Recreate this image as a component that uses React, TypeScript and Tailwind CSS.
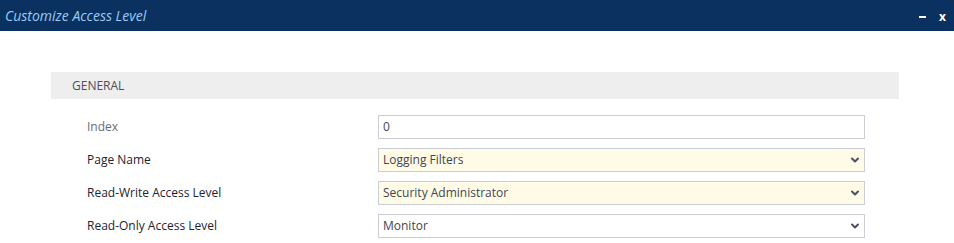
import { ChevronDown } from 'lucide-react';

const font = { fontFamily: '"Open Sans", "Noto Sans", sans-serif' };

type Row = { label: string; value: string; select?: boolean; yellow?: boolean; muted?: boolean };

const ROWS: Row[] = [
  { label: 'Index', value: '0', muted: true },
  { label: 'Page Name', value: 'Logging Filters', select: true, yellow: true },
  { label: 'Read-Write Access Level', value: 'Security Administrator', select: true, yellow: true },
  { label: 'Read-Only Access Level', value: 'Monitor', select: true },
];

export default function App() {
  return (
    <div className="h-[243px] w-[954px] overflow-hidden bg-white" style={font}>
      <div className="flex h-[31px] items-center justify-between bg-[#0a3160] pl-[5px] pr-[8px]">
        <span className="text-[14px] italic text-[#9ccbf5]">Customize Access Level</span>
        <div className="flex items-center gap-[13px] pt-[3px]">
          <span className="block h-[2px] w-[7px] bg-white" />
          <span className="text-[12px] font-bold leading-none text-white">x</span>
        </div>
      </div>

      <div className="pl-[51px] pr-[55px] pt-[41px]">
        <div className="flex h-[27px] items-center bg-[#eeeeee] px-[21px] text-[12px] text-[#4a4f5a]">
          GENERAL
        </div>
        <div className="flex flex-col gap-[9px] pt-[16px]">
          {ROWS.map((row) => (
            <div key={row.label} className="flex items-center">
              <div
                className={`w-[327px] pl-[36px] text-[12px] ${row.muted ? 'text-[#676c78]' : 'font-medium text-[#1f2330]'}`}
              >
                {row.label}
              </div>
              <div
                className={`flex h-[24px] w-[487px] items-center justify-between border border-[#c9cdd4] pl-[4px] pr-[3px] text-[12px] text-[#414654] ${row.yellow ? 'bg-[#fffbe6]' : 'bg-white'}`}
              >
                <span>{row.value}</span>
                {row.select && <ChevronDown className="size-[12px] text-[#4a5060]" strokeWidth={4} />}
              </div>
            </div>
          ))}
        </div>
      </div>
    </div>
  );
}
